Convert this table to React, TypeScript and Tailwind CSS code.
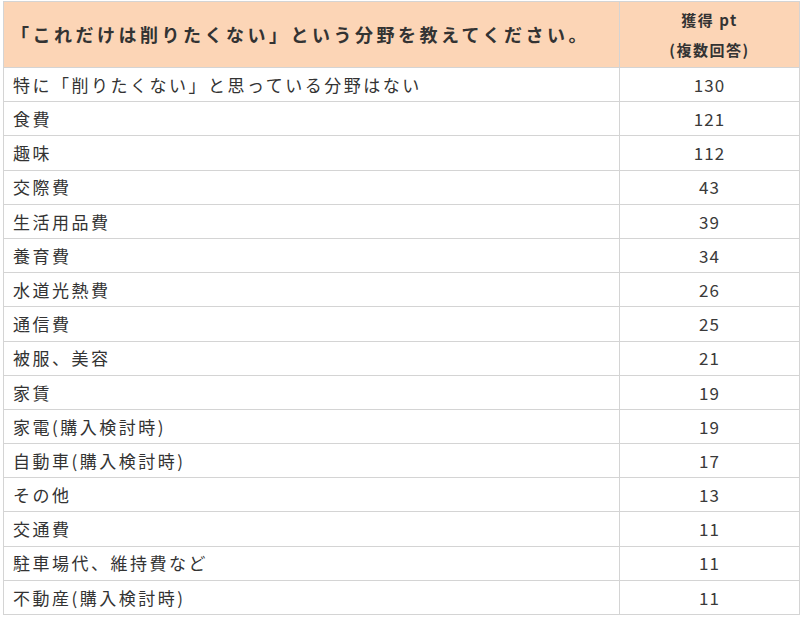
const rows: [string, string][] = [
  ["特に「削りたくない」と思っている分野はない", "130"],
  ["食費", "121"],
  ["趣味", "112"],
  ["交際費", "43"],
  ["生活用品費", "39"],
  ["養育費", "34"],
  ["水道光熱費", "26"],
  ["通信費", "25"],
  ["被服、美容", "21"],
  ["家賃", "19"],
  ["家電(購入検討時)", "19"],
  ["自動車(購入検討時)", "17"],
  ["その他", "13"],
  ["交通費", "11"],
  ["駐車場代、維持費など", "11"],
  ["不動産(購入検討時)", "11"],
];

export default function App() {
  return (
    <div className="h-[618px] w-[802px] bg-white pl-[3px] pt-[1px] text-[#333] [font-family:'Noto_Sans_CJK_JP',sans-serif]">
      <table className="w-[796px] table-fixed border-collapse">
        <colgroup>
          <col className="w-[616px]" />
          <col className="w-[180px]" />
        </colgroup>
        <thead>
          <tr className="h-[66px] bg-[#fcd5b6]">
            <th className="border border-[#d4d4d4] pl-[7px] text-left text-[18px] font-bold tracking-[3.5px]">
              「これだけは削りたくない」という分野を教えてください。
            </th>
            <th className="border border-[#d4d4d4] text-center text-[15px] font-bold leading-[30px] tracking-[1.5px]">
              <div>獲得 pt</div>
              <div>(複数回答)</div>
            </th>
          </tr>
        </thead>
        <tbody>
          {rows.map(([label, pt]) => (
            <tr key={label} className="h-[34.2px]">
              <td className="border border-[#d4d4d4] pl-[9px] text-[17px] tracking-[2.5px]">{label}</td>
              <td className="border border-[#d4d4d4] text-center text-[17px] tracking-[1px] text-[#3a3a3a]">{pt}</td>
            </tr>
          ))}
        </tbody>
      </table>
    </div>
  );
}
